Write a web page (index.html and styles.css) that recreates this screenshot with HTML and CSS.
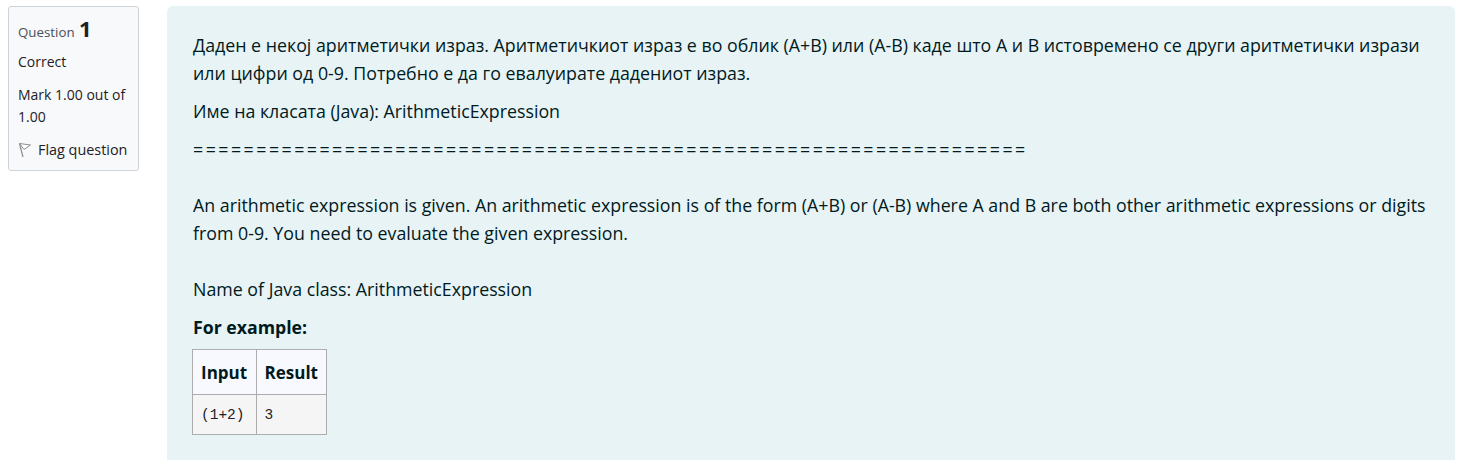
FILE: index.html
```html
<!DOCTYPE html>
<html lang="en">
<head>
  <meta charset="UTF-8" />
  <title>Question 1</title>
  <link rel="stylesheet" href="styles.css">
</head>
<body>

<div class="que">
  <div class="info">
    <h3 class="qno">Question <span class="num">1</span></h3>
    <div class="state">Correct</div>
    <div class="grade">Mark 1.00 out of 1.00</div>
    <div class="flag">
      <svg class="flag-icon" width="14" height="16" viewBox="0 0 14 16">
        <path d="M1.5 1.5 L12.5 3 L6 7.5 Z" fill="#fff" stroke="#8a8f94" stroke-width="1"/>
        <path d="M1.5 1.5 L5 15" fill="none" stroke="#8a8f94" stroke-width="1.2"/>
      </svg>
      <span>Flag question</span>
    </div>
  </div>

  <div class="content">
    <p>Даден е некој аритметички израз. Аритметичкиот израз е во облик (А+В) или (А-В) каде што А и В истовремено се други аритметички изрази или цифри од 0-9. Потребно е да го евалуирате дадениот израз.</p>
    <p>Име на класата (Java): ArithmeticExpression</p>
    <p><span class="rule">==================================================================</span><br><br>An arithmetic expression is given. An arithmetic expression is of the form (A+B) or (A-B) where A and B are both other arithmetic expressions or digits from 0-9. You need to evaluate the given expression.<br><br>Name of Java class: ArithmeticExpression</p>
    <h4 class="for-example">For example:</h4>
    <table class="example">
      <thead>
        <tr><th>Input</th><th>Result</th></tr>
      </thead>
      <tbody>
        <tr><td>(1+2)</td><td>3</td></tr>
      </tbody>
    </table>
  </div>
</div>

</body>
</html>
```

FILE: styles.css
```css
* {
  box-sizing: border-box;
  margin: 0;
  padding: 0;
}

html, body {
  height: 460px;
  overflow: hidden;
}

body {
  background: #fff;
  color: #1d2125;
  font-family: 'Open Sans', sans-serif;
}

.que {
  display: flex;
  align-items: flex-start;
  padding: 6px 3px 0 8px;
}

.info {
  width: 131px;
  flex: none;
  height: 165px;
  padding: 7px 9px;
  background: #f8f9fa;
  border: 1px solid #ced4da;
  border-radius: 3px;
  font-size: 14px;
  line-height: 22px;
}

.qno {
  font-size: 13.3px;
  font-weight: 400;
  line-height: 28px;
  color: #495057;
}

.num {
  font-size: 22px;
  font-weight: 700;
  color: #1d2125;
  margin-left: 1px;
}

.state {
  margin-top: 5px;
}

.grade {
  margin-top: 11px;
}

.flag {
  display: flex;
  align-items: center;
  gap: 6px;
  margin-top: 11px;
  font-size: 14.4px;
  white-space: nowrap;
}

.content {
  flex: 1;
  height: 454px;
  margin-left: 28px;
  padding: 25px 26px 0;
  background: #e7f3f5;
  border-radius: 6px 6px 0 0;
  color: #001a1e;
  font-size: 17.8px;
  line-height: 28px;
}

.content p {
  margin-bottom: 10px;
}

.rule {
  letter-spacing: 2.48px;
}

.for-example {
  font-size: 17.7px;
  font-weight: 700;
  line-height: 24px;
  margin-top: 12px;
  margin-bottom: 10px;
}

.example {
  border-collapse: collapse;
  margin-left: -1px;
  width: 135px;
}

.example th,
.example td {
  border: 1px solid #adadad;
  padding: 0 8px;
  text-align: left;
}

.example th {
  height: 45px;
  padding-top: 1px;
  background: #f8f9ff;
  font-size: 17px;
  font-weight: 700;
}

.example th:first-child {
  width: 64px;
}

.example td {
  height: 40px;
  background: #f5f5f5;
  font-family: 'Liberation Mono', monospace;
  font-size: 14.5px;
  color: #1d2125;
}
```
